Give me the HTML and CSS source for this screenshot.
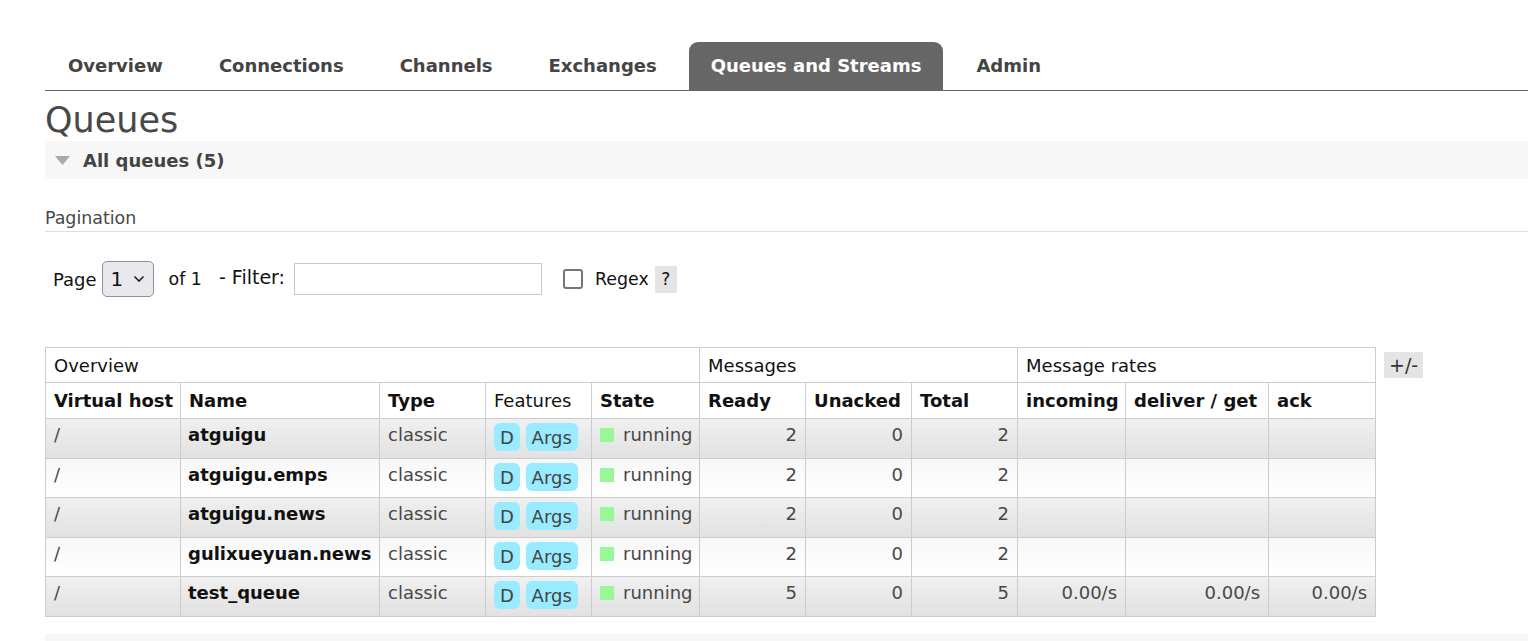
FILE: index.html
```html
<!DOCTYPE html>
<html>
<head>
<meta charset="utf-8">
<title>Queues</title>
<link rel="stylesheet" href="styles.css">
</head>
<body>
<div class="page">
  <ul class="tabs">
    <li><a>Overview</a></li>
    <li><a>Connections</a></li>
    <li><a>Channels</a></li>
    <li><a>Exchanges</a></li>
    <li class="active"><a>Queues and Streams</a></li>
    <li><a>Admin</a></li>
  </ul>
  <h1 class="title">Queues</h1>
  <div class="section-bar">
    <svg class="tri" width="15" height="9" viewBox="0 0 15 9"><polygon points="0,0 15,0 7.5,9" fill="#aaaaaa"/></svg>
    <span>All queues (5)</span>
  </div>
  <h3 class="sub">Pagination</h3>
  <div class="pager">
    <span class="lbl page-lbl">Page</span>
    <span class="select">1 <svg width="12" height="8" viewBox="0 0 12 8"><polyline points="1.5,1.5 6,6 10.5,1.5" fill="none" stroke="#222" stroke-width="1.6"/></svg></span>
    <span class="lbl of">of 1</span>
    <span class="lbl filter">- Filter:</span>
    <span class="input"></span>
    <span class="check"></span>
    <span class="lbl regex">Regex</span>
    <span class="help">?</span>
  </div>
  <div class="table-wrap">
    <table class="list">
      <colgroup>
        <col class="c-vh"><col class="c-name"><col class="c-type"><col class="c-feat"><col class="c-state">
        <col class="c-ready"><col class="c-unack"><col class="c-total">
        <col class="c-in"><col class="c-deliver"><col class="c-ack">
      </colgroup>
      <thead>
        <tr class="group">
          <th colspan="5">Overview</th>
          <th colspan="3">Messages</th>
          <th colspan="3">Message rates</th>
        </tr>
        <tr class="cols">
          <th>Virtual host</th><th>Name</th><th>Type</th><th class="plain">Features</th><th>State</th>
          <th>Ready</th><th>Unacked</th><th>Total</th>
          <th>incoming</th><th>deliver / get</th><th>ack</th>
        </tr>
      </thead>
      <tbody>
        <tr class="alt1">
          <td>/</td><td class="name">atguigu</td><td>classic</td>
          <td><span class="badge">D</span> <span class="badge">Args</span></td>
          <td><span class="dot"></span>running</td>
          <td class="num">2</td><td class="num">0</td><td class="num">2</td>
          <td></td><td></td><td></td>
        </tr>
        <tr class="alt2">
          <td>/</td><td class="name">atguigu.emps</td><td>classic</td>
          <td><span class="badge">D</span> <span class="badge">Args</span></td>
          <td><span class="dot"></span>running</td>
          <td class="num">2</td><td class="num">0</td><td class="num">2</td>
          <td></td><td></td><td></td>
        </tr>
        <tr class="alt1">
          <td>/</td><td class="name">atguigu.news</td><td>classic</td>
          <td><span class="badge">D</span> <span class="badge">Args</span></td>
          <td><span class="dot"></span>running</td>
          <td class="num">2</td><td class="num">0</td><td class="num">2</td>
          <td></td><td></td><td></td>
        </tr>
        <tr class="alt2">
          <td>/</td><td class="name">gulixueyuan.news</td><td>classic</td>
          <td><span class="badge">D</span> <span class="badge">Args</span></td>
          <td><span class="dot"></span>running</td>
          <td class="num">2</td><td class="num">0</td><td class="num">2</td>
          <td></td><td></td><td></td>
        </tr>
        <tr class="alt1">
          <td>/</td><td class="name">test_queue</td><td>classic</td>
          <td><span class="badge">D</span> <span class="badge">Args</span></td>
          <td><span class="dot"></span>running</td>
          <td class="num">5</td><td class="num">0</td><td class="num">5</td>
          <td class="num">0.00/s</td><td class="num">0.00/s</td><td class="num">0.00/s</td>
        </tr>
      </tbody>
    </table>
    <span class="toggle">+/-</span>
  </div>
  <div class="section-bar bottom"></div>
</div>
</body>
</html>
```
FILE: styles.css
```css
html, body {
  margin: 0;
  padding: 0;
  background: #fff;
}
body {
  font-family: "DejaVu Sans", Verdana, sans-serif;
  font-size: 18px;
  color: #484848;
  overflow: hidden;
}
.page {
  padding-left: 45px;
}
.tabs {
  list-style: none;
  margin: 42px 0 0;
  padding: 0;
  display: flex;
  border-bottom: 1px solid #666;
}
.tabs li {
  margin-right: 10px;
}
.tabs li.active {
  margin-left: -1px;
}
.tabs li a {
  display: block;
  padding: 0 23px;
  height: 48px;
  line-height: 48px;
  font-weight: bold;
  font-size: 18px;
  color: #444;
  border-radius: 9px 9px 0 0;
}
.tabs li.active a {
  background: #666;
  color: #fff;
  padding: 0 22px;
}
.title {
  margin: 0;
  padding-top: 8px;
  height: 42px;
  line-height: 42px;
  font-size: 35px;
  font-weight: normal;
  color: #484848;
}
.section-bar {
  display: flex;
  align-items: center;
  height: 38px;
  background: #f7f7f7;
  font-weight: bold;
  color: #444;
}
.section-bar .tri {
  margin-left: 10px;
  margin-right: 13px;
}
.sub {
  margin: 28px 0 0;
  padding-bottom: 2px;
  font-size: 17.4px;
  line-height: 22px;
  font-weight: normal;
  color: #484848;
  border-bottom: 1px solid #ddd;
}
.pager {
  display: flex;
  align-items: center;
  margin-top: 29px;
  height: 36px;
  color: #111;
}
.pager .lbl {
  font-size: 17.4px;
}
.pager .page-lbl {
  margin-left: 8px;
  font-size: 18px;
}
.select {
  display: inline-flex;
  align-items: center;
  gap: 10px;
  box-sizing: border-box;
  width: 52px;
  height: 36px;
  margin-left: 5px;
  padding-left: 8px;
  border: 1px solid #8f8f9d;
  border-radius: 5px;
  background: #e9e9ed;
  font-size: 20px;
}
.of {
  margin-left: 15px;
}
.pager .filter {
  margin-left: 17px;
  font-size: 19px;
  position: relative;
  top: -2px;
}
.input {
  display: block;
  box-sizing: border-box;
  width: 248px;
  height: 32px;
  margin-left: 9px;
  border: 1px solid #c8c8c8;
  background: #fff;
}
.check {
  display: block;
  box-sizing: border-box;
  width: 20px;
  height: 20px;
  margin-left: 21px;
  border: 2px solid #767676;
  border-radius: 3px;
}
.regex {
  margin-left: 12px;
}
.help {
  display: block;
  margin-left: 6px;
  width: 22px;
  height: 27px;
  line-height: 27px;
  text-align: center;
  background: #e4e4e4;
  font-size: 17px;
}
.table-wrap {
  display: flex;
  align-items: flex-start;
  margin-top: 50px;
}
table.list {
  border-collapse: collapse;
  table-layout: fixed;
  width: 1331px;
}
.c-vh { width: 135px; }
.c-name { width: 199px; }
.c-type { width: 106px; }
.c-feat { width: 106px; }
.c-state { width: 108px; }
.c-ready { width: 106px; }
.c-unack { width: 106px; }
.c-total { width: 106px; }
.c-in { width: 108px; }
.c-deliver { width: 143px; }
.c-ack { width: 107px; }
table.list th,
table.list td {
  border: 1px solid #ccc;
  text-align: left;
  white-space: nowrap;
  overflow: hidden;
}
table.list th {
  color: #111;
  padding: 0 8px;
}
tr.group th {
  height: 34px;
  font-weight: normal;
}
tr.cols th {
  height: 35px;
  font-weight: bold;
}
tr.cols th.plain {
  font-weight: normal;
}
table.list td {
  padding: 4px 8px 6.6px;
  line-height: 24px;
  vertical-align: top;
  color: #484848;
}
table.list td.name {
  font-weight: bold;
  color: #111;
  padding-left: 7px;
}
table.list td.num {
  text-align: right;
}
tr.alt1 {
  background: linear-gradient(#f0f0f0, #e1e1e1);
}
tr.alt2 {
  background: linear-gradient(#f7f7f7, #ffffff);
}
.badge {
  display: inline-block;
  padding: 3px 6px 1px;
  line-height: 24px;
  border-radius: 6px;
  background: #99ebff;
  color: #444;
}
.dot {
  display: inline-block;
  width: 14px;
  height: 14px;
  margin-right: 9px;
  background: #98f898;
  vertical-align: -1px;
}
.toggle {
  display: block;
  margin-left: 8px;
  margin-top: 5px;
  padding: 0 5px;
  height: 26px;
  line-height: 26px;
  background: #e4e4e4;
  color: #333;
  font-size: 19px;
}
.section-bar.bottom {
  margin-top: 17px;
  height: 20px;
}
```
